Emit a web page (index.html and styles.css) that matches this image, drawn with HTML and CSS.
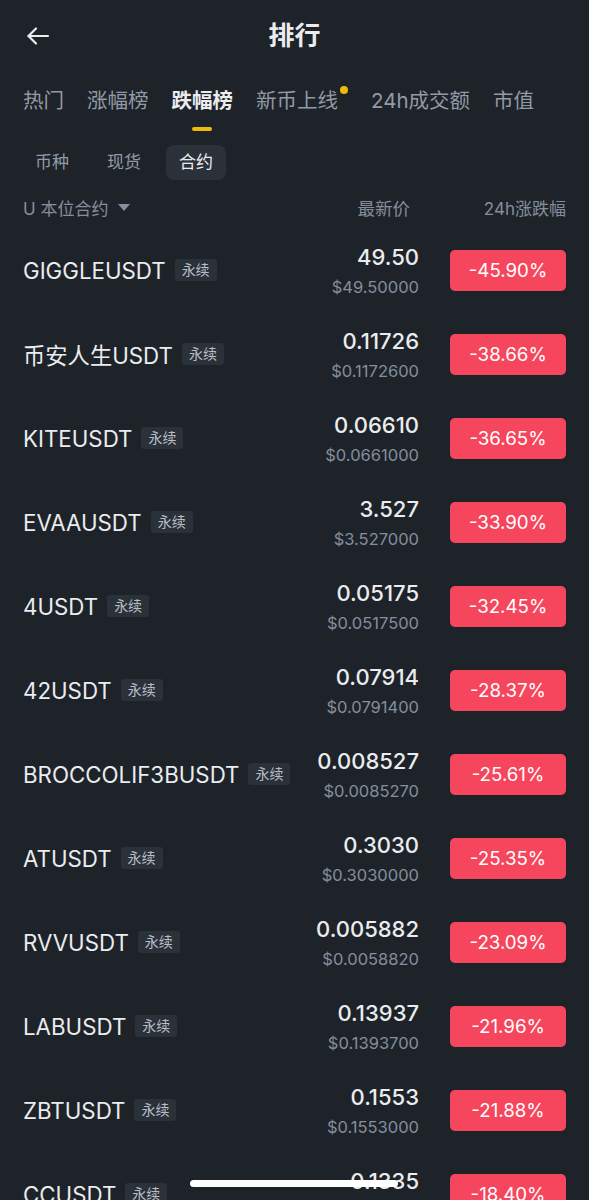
FILE: index.html
```html
<!DOCTYPE html>
<html lang="zh-CN">

<head>
    <meta charset="UTF-8">
    <meta name="viewport" content="width=device-width, initial-scale=1.0">
    <title>排行</title>
    <link rel="stylesheet" href="styles.css">
</head>

<body>
    <div class="page">
        <header class="topbar">
            <span class="back">
                <svg width="24" height="24" viewBox="0 0 24 24" fill="none" stroke="#eaecef" stroke-width="2.2"
                    stroke-linecap="round" stroke-linejoin="round">
                    <path d="M22 12H2.5" />
                    <path d="M10 4.5L2.5 12L10 19.5" />
                </svg>
            </span>
            <h1>排行</h1>
        </header>

        <nav class="tabs">
            <div class="tab">热门</div>
            <div class="tab">涨幅榜</div>
            <div class="tab active">跌幅榜</div>
            <div class="tab has-dot">新币上线<span class="dot"></span></div>
            <div class="tab">24h成交额</div>
            <div class="tab">市值</div>
        </nav>

        <div class="subtabs">
            <span class="subtab">币种</span>
            <span class="subtab">现货</span>
            <span class="subtab active">合约</span>
        </div>

        <div class="list-head">
            <span class="filter">U 本位合约 <span class="caret"></span></span>
            <span class="col-price">最新价</span>
            <span class="col-change">24h涨跌幅</span>
        </div>

        <ul class="list" id="list"></ul>
    </div>

    <div class="home-bar"></div>

    <script>
        // rows of the ranking
        const rows = [
            ['GIGGLEUSDT', '49.50', '$49.50000', '-45.90%'],
            ['币安人生USDT', '0.11726', '$0.1172600', '-38.66%'],
            ['KITEUSDT', '0.06610', '$0.0661000', '-36.65%'],
            ['EVAAUSDT', '3.527', '$3.527000', '-33.90%'],
            ['4USDT', '0.05175', '$0.0517500', '-32.45%'],
            ['42USDT', '0.07914', '$0.0791400', '-28.37%'],
            ['BROCCOLIF3BUSDT', '0.008527', '$0.0085270', '-25.61%'],
            ['ATUSDT', '0.3030', '$0.3030000', '-25.35%'],
            ['RVVUSDT', '0.005882', '$0.0058820', '-23.09%'],
            ['LABUSDT', '0.13937', '$0.1393700', '-21.96%'],
            ['ZBTUSDT', '0.1553', '$0.1553000', '-21.88%'],
            ['CCUSDT', '0.1335', '$0.1335000', '-18.40%']
        ];

        let list = document.getElementById('list');
        let html = '';
        rows.forEach(function (r) {
            html += '<li class="row">' +
                '<div class="name"><span class="symbol">' + r[0] + '</span><span class="tag">永续</span></div>' +
                '<div class="price"><span class="last">' + r[1] + '</span><span class="fiat">' + r[2] + '</span></div>' +
                '<div class="change">' + r[3] + '</div>' +
                '</li>';
        });
        list.innerHTML = html;
    </script>
</body>

</html>
```

FILE: styles.css
```css
* {
    box-sizing: border-box;
}

html,
body {
    margin: 0;
    padding: 0;
    height: 1200px;
    overflow: hidden;
}

body {
    background-color: #1e2329;
    color: #eaecef;
    font-family: Inter, "Noto Sans CJK SC", sans-serif;
}

.page {
    width: 589px;
}

/* top bar */
.topbar {
    height: 72px;
    display: flex;
    align-items: center;
    justify-content: center;
    position: relative;
}

.back {
    position: absolute;
    left: 26px;
    top: 24px;
    width: 24px;
    height: 24px;
}

.back svg {
    display: block;
}

.topbar h1 {
    margin: 0;
    font-size: 26px;
    font-weight: 700;
    line-height: 30px;
    color: #eaecef;
}

/* main tabs */
.tabs {
    display: flex;
    gap: 23px;
    padding: 15px 0 0 23px;
}

.tab {
    position: relative;
    font-size: 20.5px;
    line-height: 28px;
    color: #929aa5;
    padding-bottom: 16px;
    white-space: nowrap;
}

.tab.active {
    color: #eaecef;
    font-weight: 700;
}

.tab.active::after {
    content: "";
    position: absolute;
    left: 50%;
    bottom: 0;
    width: 20px;
    height: 4px;
    margin-left: -10px;
    border-radius: 2px;
    background-color: #f0b90b;
}

.tab.has-dot {
    margin-right: 10px;
}

.dot {
    position: absolute;
    right: -10px;
    top: -1px;
    width: 8px;
    height: 8px;
    border-radius: 50%;
    background-color: #f0b90b;
}

/* sub tabs */
.subtabs {
    display: flex;
    gap: 12px;
    padding: 14px 0 0 22px;
}

.subtab {
    height: 35px;
    line-height: 35px;
    padding: 0 13px;
    font-size: 17px;
    color: #929aa5;
    border-radius: 8px;
}

.subtab.active {
    background-color: #2b3139;
    color: #eaecef;
}

/* list header */
.list-head {
    display: flex;
    align-items: center;
    height: 22px;
    margin: 16px 0 10px;
    padding: 0 23px;
    font-size: 17px;
    color: #848e9c;
}

.filter {
    flex: 1;
    display: flex;
    align-items: center;
}

.caret {
    display: inline-block;
    width: 0;
    height: 0;
    margin-left: 10px;
    border-left: 6px solid transparent;
    border-right: 6px solid transparent;
    border-top: 7px solid #848e9c;
}

.col-price {
    width: 120px;
    text-align: right;
    font-size: 17.5px;
}

.col-change {
    width: 156px;
    text-align: right;
}

/* rows */
.list {
    list-style: none;
    margin: 0;
    padding: 0;
}

.row {
    display: flex;
    align-items: center;
    height: 84px;
    padding: 0 23px;
}

.name {
    flex: 1;
    display: flex;
    align-items: center;
    min-width: 0;
}

.symbol {
    font-size: 22.3px;
    font-weight: 400;
    color: #eaecef;
    white-space: nowrap;
}

.tag {
    margin-left: 9px;
    height: 22px;
    line-height: 22px;
    padding: 0 7px;
    font-size: 14px;
    color: #b7bdc6;
    background-color: #2b3139;
    border-radius: 3px;
}

.price {
    display: flex;
    flex-direction: column;
    align-items: flex-end;
    gap: 6px;
    padding-top: 4px;
}

.last {
    font-size: 22px;
    font-weight: 500;
    line-height: 24px;
    color: #eaecef;
}

.fiat {
    font-size: 16.5px;
    line-height: 24px;
    color: #848e9c;
}

.change {
    width: 116px;
    height: 41px;
    margin-left: 31px;
    line-height: 41px;
    text-align: center;
    font-size: 18.7px;
    font-weight: 400;
    color: #fff;
    background-color: #f6465d;
    border-radius: 5px;
}

/* iOS home indicator */
.home-bar {
    position: fixed;
    left: 190px;
    bottom: 13px;
    width: 208px;
    height: 7px;
    border-radius: 4px;
    background-color: #fff;
}
```
